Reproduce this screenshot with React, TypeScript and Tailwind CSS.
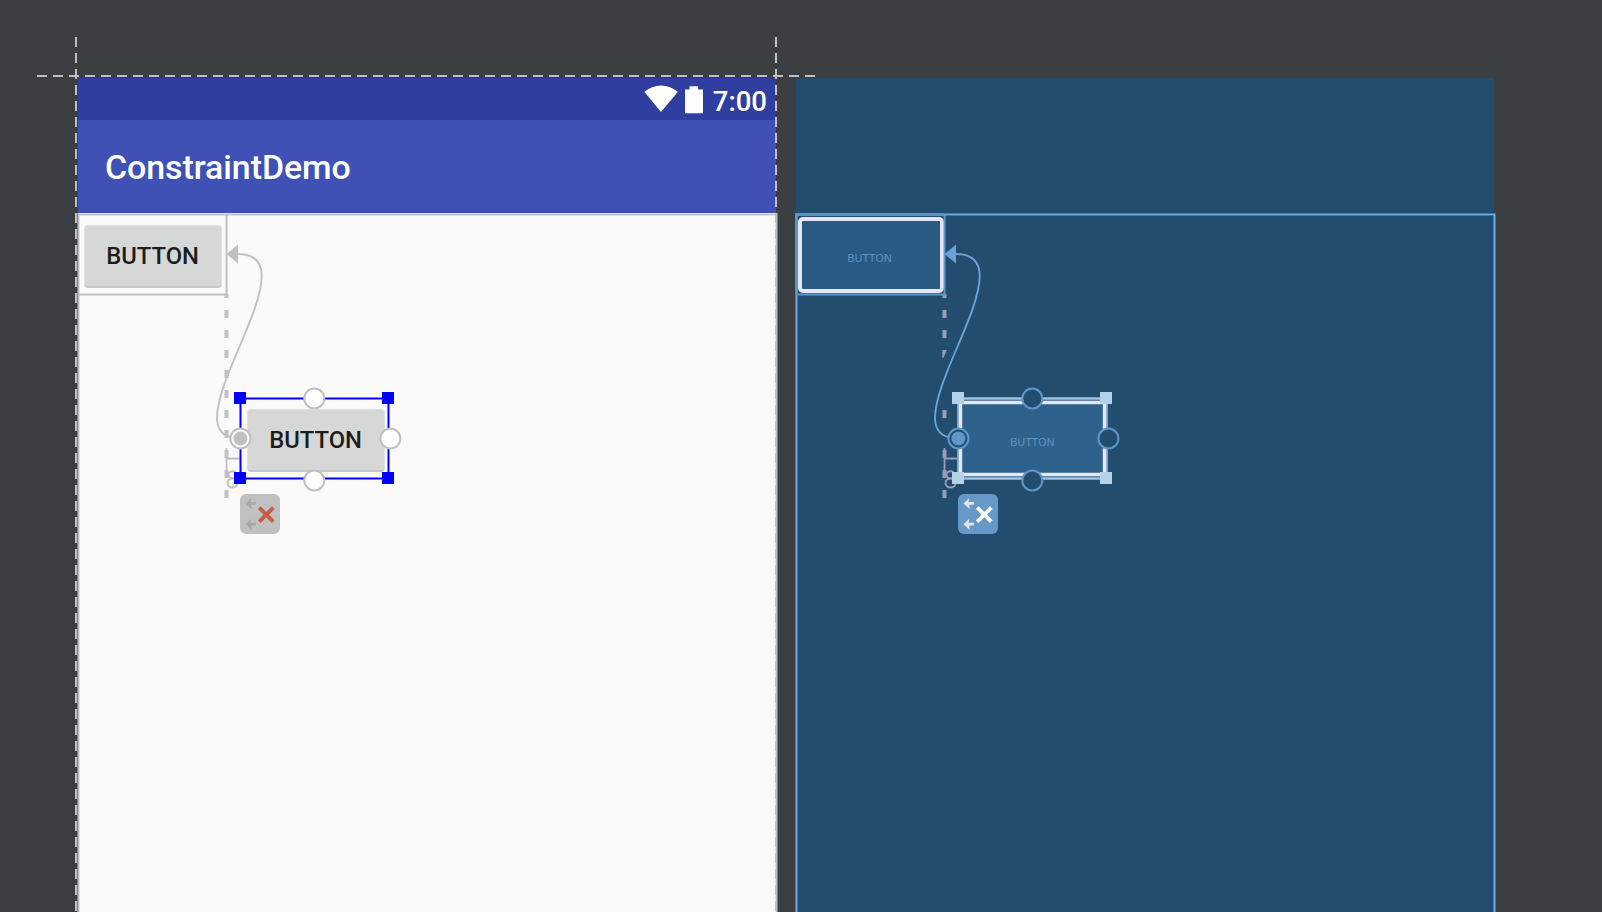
import React from "react";

type Theme = {
  line: string;
  link: string;
  guide: string;
  fill: string;
  border: string;
  chip: string;
  handle: string;
  arrow: string;
  cross: string;
  blueprint: boolean;
};

const design: Theme = {
  line: "#c0c0c0", link: "#c0c0c0", guide: "#c0c0c0", fill: "#fdfdfd", border: "#c0c0c0",
  handle: "#0000ff", chip: "#c0c0c0", arrow: "#a8a8a8", cross: "#c75c4a", blueprint: false,
};

const blueprint: Theme = {
  line: "#5f97c9", link: "#6aa3d6", guide: "#9c9bba", fill: "#224d6e", border: "#6aade8",
  handle: "#b4d2e7", chip: "#6699c9", arrow: "#e4e4e0", cross: "#ffffff", blueprint: true,
};

const designDashes = [[216, 4], [232, 8], [252, 8], [272, 8], [292, 8], [312, 8], [332, 8], [352, 8], [372, 8], [392, 8], [412, 8]];
const blueprintDashes = [[216, 4], [232, 8], [252, 8], [332, 8], [372, 8], [392, 8], [412, 8]];

function Constraints({ t }: { t: Theme }) {
  return (
    <svg className="absolute left-0 top-0 overflow-visible" width="700" height="834" viewBox="0 0 700 834" fill="none">
      <path d="M0.5 836V136.5H698.5V836" stroke={t.border} strokeOpacity="0.45" strokeWidth="3" />
      <path d="M0.5 836V136.5H698.5V836" stroke={t.border} strokeWidth="1.2" />
      {t.blueprint && <path d="M148.5 136.5H0.5V216" stroke="#5f97c9" strokeWidth="2.6" />}
      <g fill={t.guide}>
        {(t.blueprint ? blueprintDashes : designDashes).map(([y, h]) => <rect key={y} x="146.5" y={y} width="4" height={h} />)}
        {t.blueprint && <path d="M146.3 272h4.5l-3.5 8h-1z" />}
      </g>
      <path d="M148.5 136V216.4M0 216.4H149.5" stroke={t.line} strokeWidth="2" />
      <path d="M160 176C175 176 183.7 183 183.7 198C183.7 235 139 303 139 340C139 352 146 359 156 359.5" stroke={t.link} strokeWidth="1.9" />
      <path d="M148.5 176L160 166.5V185.5Z" fill={t.link} />
      <path d="M148.5 370V392M149 380.5H162" stroke={t.guide} strokeWidth="1.8" />
      <ellipse cx="154.5" cy="396.8" rx="4" ry="3.6" stroke={t.guide} strokeWidth="1.9" />
      <ellipse cx="154.5" cy="405" rx="5" ry="4.5" stroke={t.guide} strokeWidth="1.9" />
      {t.blueprint ? (
        <>
          <path d="M162.5 320.5H310.5V400.5H162.5Z" fill="#2e628d" stroke="#7da3c6" strokeWidth="3" />
          <path d="M163.5 320.5H310M163.5 400.5H310" stroke="#a4c8de" strokeWidth="1" />
          <path d="M164.5 324.5H308.5V396.5H164.5Z" stroke="#e6e6fa" strokeWidth="3.4" />
        </>
      ) : (
        <path d="M162.5 320.5H310.5V400.5H162.5Z" stroke={t.handle} strokeWidth="2" />
      )}
      <g fill={t.handle}>
        <rect x="156" y="314" width="12" height="12" />
        <rect x="304" y="314" width="12" height="12" />
        <rect x="156" y="394" width="12" height="12" />
        <rect x="304" y="394" width="12" height="12" />
      </g>
      <g fill={t.fill} stroke={t.line} strokeWidth="2">
        <circle cx="236.3" cy="320.5" r="10" />
        <circle cx="312.4" cy="360.5" r="10" />
        <circle cx="236.3" cy="402.5" r="10" />
        <circle cx="162.4" cy="360.5" r="10" />
      </g>
      <circle cx="162.4" cy="360.5" r="7" fill={t.line} />
      <rect x="162" y="416" width="40" height="40" rx="6" fill={t.chip} />
      <g fill={t.arrow}>
        <path d="M167.5 425.5L173.3 420L172.6 424.1L178 424V426.6L173 427L174 431.2Z" />
        <path d="M167.5 446.2L173.3 440.7L172.6 444.8L178 444.7V447.3L173 447.7L174 451.9Z" />
      </g>
      <path d="M181.3 429.7L195.3 443.7M195.3 429.7L181.3 443.7" stroke={t.cross} strokeWidth="3.9" />
    </svg>
  );
}

function DesignButton({ className }: { className: string }) {
  return (
    <div className={`absolute flex h-[63px] w-[138px] items-center justify-center rounded-[4px] border border-b-2 border-[#dfe0e0] border-b-[#c8caca] bg-[#d6d8d7] pt-[2px] ${className}`}>
      <span className="text-[23.8px] font-medium text-[#1c1d1c]">BUTTON</span>
    </div>
  );
}

function DesignSurface() {
  return (
    <section className="relative flex w-[698px] flex-col font-['Roboto',sans-serif]">
      <div className="flex h-[42px] items-center justify-end bg-[#303f9f] pr-[9px] text-white">
        <svg width="62" height="34" viewBox="0 0 62 34" fill="white">
          <path d="M0.3 9.8Q17 -2.6 33.9 9.8L17 30Z" />
          <path d="M41 7.6H45.5V4.3H54V7.6H59V31.3H41Z" />
        </svg>
        <span className="ml-[7px] pt-[6px] text-[27.5px] font-medium leading-none">7:00</span>
      </div>
      <div className="flex h-[93px] items-center bg-[#3f51b5] pl-[27px] pt-[2px]">
        <h1 className="text-[33.9px] font-medium leading-none tracking-[-0.05px] text-white">ConstraintDemo</h1>
      </div>
      <div className="flex-1 bg-[#fafafa]" />
      <DesignButton className="left-[5.6px] top-[147px]" />
      <DesignButton className="left-[168.6px] top-[330.5px]" />
      <Constraints t={design} />
    </section>
  );
}

function BlueprintSurface() {
  return (
    <section className="relative flex w-[698px] flex-col bg-[#224d6e] font-['DejaVu_Sans',sans-serif] text-[11px] text-[#5b90c0]">
      <div className="absolute left-[2px] top-[138.5px] flex h-[76px] w-[146px] items-center justify-center rounded-[5px] border-4 border-[#e6e6fa] bg-[#2a5a83]">
        <span className="pr-[3px] pt-[9px] tracking-[-0.2px]">BUTTON</span>
      </div>
      <Constraints t={blueprint} />
      <span className="absolute left-[214px] top-[357px] tracking-[-0.2px]">BUTTON</span>
    </section>
  );
}

function Guides() {
  return (
    <svg className="absolute left-0 top-0" width="1602" height="912" fill="none">
      <path d="M37 76H815M76 37V912M776 37V214" stroke="#c0c0c0" strokeWidth="2" strokeDasharray="10 6" />
      <path d="M775.5 214V912" stroke="#c0c0c0" strokeWidth="1" />
      <path d="M775.5 223V912" stroke="#e0e0e0" strokeWidth="1" strokeDasharray="6 10" />
    </svg>
  );
}

export default function App() {
  return (
    <main className="relative flex h-[912px] w-[1602px] gap-5 overflow-hidden bg-[#3c3f41] pl-[78px] pt-[78px]">
      <DesignSurface />
      <BlueprintSurface />
      <Guides />
    </main>
  );
}
